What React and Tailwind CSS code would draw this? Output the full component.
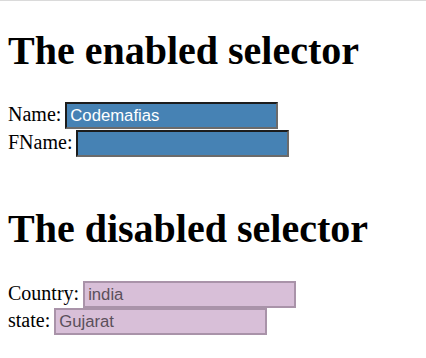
export default function App() {
  const serif = { fontFamily: '"Liberation Serif", "Times New Roman", serif' };

  const enabledInput =
    "h-[27px] w-[213px] border-2 border-t-[#1c1c1c] border-l-[#1c1c1c] border-r-[#6b6b6b] border-b-[#6b6b6b] bg-[#4682b4] pl-[3px] text-[16.7px] text-white outline-none [font-family:'Liberation_Sans',Arial,sans-serif]";
  const disabledInput =
    "h-[27px] w-[213px] border-2 border-[#a993a9] bg-[#d8bfd8] pl-[3px] text-[16.7px] text-[#5b505b] outline-none [font-family:'Liberation_Sans',Arial,sans-serif]";

  return (
    <div className="min-h-[358px] w-full border-t border-[#dadada] bg-white text-black" style={serif}>
      <div className="px-[8px]">
        {/* Enabled */}
        <h1 className="mt-[27px] mb-[28px] text-[40px] font-bold leading-[46px]">The enabled selector</h1>
        <div className="flex h-[28px] items-baseline gap-[4px] text-[20px] leading-[23px]">
          <span>Name:</span>
          <input className={enabledInput} defaultValue="Codemafias" />
        </div>
        <div className="flex h-[28px] items-baseline gap-[4px] text-[20px] leading-[23px]">
          <span>FName:</span>
          <input className={enabledInput} defaultValue="" />
        </div>

        {/* Disabled */}
        <h1 className="mt-[48px] mb-[29px] text-[40px] font-bold leading-[46px]">The disabled selector</h1>
        <div className="flex h-[27px] items-baseline gap-[4px] text-[20px] leading-[23px]">
          <span>Country:</span>
          <input className={disabledInput} defaultValue="india" disabled />
        </div>
        <div className="flex h-[27px] items-baseline gap-[4px] text-[20px] leading-[23px]">
          <span>state:</span>
          <input className={disabledInput} defaultValue="Gujarat" disabled />
        </div>
      </div>
    </div>
  );
}
